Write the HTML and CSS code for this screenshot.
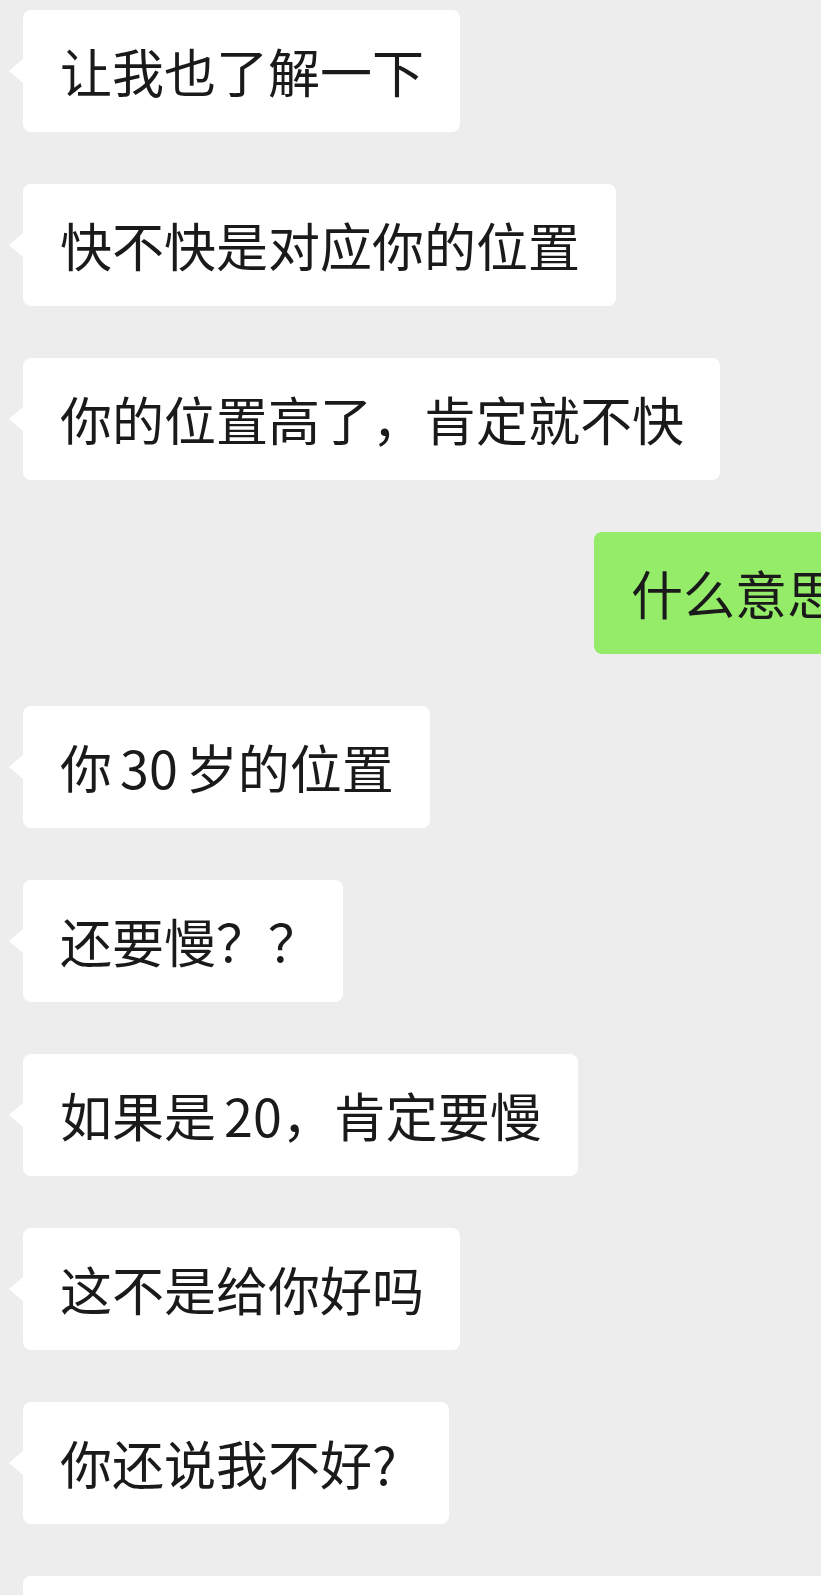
FILE: index.html
```html
<!DOCTYPE html>
<html lang="zh-CN">
<head>
    <meta charset="UTF-8">
    <meta name="viewport" content="width=device-width, initial-scale=1.0">
    <title>聊天</title>
    <link rel="stylesheet" href="styles.css">
</head>
<body>
    <div class="chat">
        <div class="row other"><div class="bubble">让我也了解一下</div></div>
        <div class="row other"><div class="bubble">快不快是对应你的位置</div></div>
        <div class="row other"><div class="bubble">你的位置高了，肯定就不快</div></div>
        <div class="row me"><div class="bubble">什么意思</div></div>
        <div class="row other"><div class="bubble">你<span class="sp"></span>30<span class="sp"></span>岁的位置</div></div>
        <div class="row other"><div class="bubble trim-end">还要慢？？</div></div>
        <div class="row other"><div class="bubble">如果是<span class="sp"></span>20，肯定要慢</div></div>
        <div class="row other"><div class="bubble">这不是给你好吗</div></div>
        <div class="row other"><div class="bubble pad-end">你还说我不好?</div></div>
        <div class="row other"><div class="bubble">你自己好好想想是不是这个道理呢</div></div>
    </div>
</body>
</html>
```

FILE: styles.css
```css
html, body {
    margin: 0;
    padding: 0;
    background-color: #ededed;
    overflow: hidden;
}

body {
    font-family: "Noto Sans CJK SC", "Liberation Sans", sans-serif;
    color: #1a1a1a;
}

.chat {
    display: flex;
    flex-direction: column;
    gap: 52px;
    padding: 10px 0 40px 23px;
}

.row {
    display: flex;
}

.row.me {
    justify-content: flex-end;
    margin-right: -54px;
}

.bubble {
    position: relative;
    background-color: #fff;
    border-radius: 8px;
    padding: 30px 36px 30px 37px;
    font-size: 52px;
    line-height: 62px;
    white-space: nowrap;
}

/* full-width ？ leaves empty room after the glyph */
.bubble.trim-end {
    padding-right: 23px;
}

.bubble.pad-end {
    padding-right: 52px;
}

/* little pointer on the side of each bubble */
.bubble::before {
    content: "";
    position: absolute;
    top: 49px;
    width: 0;
    height: 0;
    border-top: 12px solid transparent;
    border-bottom: 12px solid transparent;
}

.other .bubble::before {
    left: -14px;
    border-right: 14px solid #fff;
}

.me .bubble {
    background-color: #95ec69;
}

.me .bubble::before {
    right: -14px;
    border-left: 14px solid #95ec69;
}

.sp {
    display: inline-block;
    width: 8px;
}
```
